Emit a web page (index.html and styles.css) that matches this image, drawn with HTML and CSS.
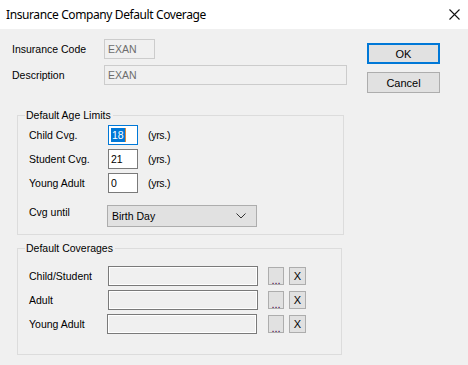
FILE: index.html
```html
<!DOCTYPE html>
<html lang="en">
<head>
    <meta charset="UTF-8">
    <title>Insurance Company Default Coverage</title>
    <link rel="stylesheet" href="styles.css">
</head>
<body>
    <div class="window">
        <div class="titlebar">
            <span class="title">Insurance Company Default Coverage</span>
            <span class="close">
                <svg width="11" height="11" viewBox="0 0 11 11"><path d="M0.5 0.5 L10.5 10.5 M10.5 0.5 L0.5 10.5" stroke="#111" stroke-width="1.1" fill="none"/></svg>
            </span>
        </div>

        <div class="dialog">
            <div class="top">
                <div class="info">
                    <div class="row">
                        <span class="label wide">Insurance Code</span>
                        <div class="textbox disabled code">EXAN</div>
                    </div>
                    <div class="row">
                        <span class="label wide">Description</span>
                        <div class="textbox disabled desc">EXAN</div>
                    </div>
                </div>
                <div class="actions">
                    <button class="btn default">OK</button>
                    <button class="btn">Cancel</button>
                </div>
            </div>

            <fieldset class="group age">
                <legend>Default Age Limits</legend>
                <div class="rows">
                    <div class="row">
                        <span class="label">Child Cvg.</span>
                        <div class="textbox num focused"><span class="sel">18</span></div>
                        <span class="unit">(yrs.)</span>
                    </div>
                    <div class="row">
                        <span class="label">Student Cvg.</span>
                        <div class="textbox num">21</div>
                        <span class="unit">(yrs.)</span>
                    </div>
                    <div class="row">
                        <span class="label">Young Adult</span>
                        <div class="textbox num">0</div>
                        <span class="unit">(yrs.)</span>
                    </div>
                </div>
                <div class="row until">
                    <span class="label">Cvg until</span>
                    <div class="combo">
                        <span>Birth Day</span>
                        <svg width="10" height="6" viewBox="0 0 10 6"><path d="M0.5 0.5 L5 5 L9.5 0.5" stroke="#333" stroke-width="1" fill="none"/></svg>
                    </div>
                </div>
            </fieldset>

            <fieldset class="group cover">
                <legend>Default Coverages</legend>
                <div class="rows">
                    <div class="row">
                        <span class="label">Child/Student</span>
                        <div class="textbox readonly"></div>
                        <button class="mini dots">...</button>
                        <button class="mini">X</button>
                    </div>
                    <div class="row">
                        <span class="label">Adult</span>
                        <div class="textbox readonly"></div>
                        <button class="mini dots">...</button>
                        <button class="mini">X</button>
                    </div>
                    <div class="row">
                        <span class="label">Young Adult</span>
                        <div class="textbox readonly shift"></div>
                        <button class="mini dots">...</button>
                        <button class="mini">X</button>
                    </div>
                </div>
            </fieldset>
        </div>
    </div>
</body>
</html>
```

FILE: styles.css
```css
* {
    margin: 0;
    padding: 0;
    box-sizing: border-box;
}

body {
    font-family: "Liberation Sans", Arial, sans-serif;
    font-size: 10.5px;
    color: #000;
    background: #f0f0f0;
}

.window {
    width: 468px;
    height: 365px;
    overflow: hidden;
}

.titlebar {
    height: 29px;
    background: #fff;
    display: flex;
    align-items: center;
    justify-content: space-between;
    padding: 0 7px 0 6px;
}

.title {
    font-family: "Noto Sans", sans-serif;
    font-size: 12px;
    letter-spacing: -0.4px;
    color: #000;
    padding-bottom: 1px;
}

.close {
    display: flex;
    padding-right: 1px;
}

.dialog {
    height: 336px;
    background: #f0f0f0;
    padding-top: 10px;
}

.top {
    display: flex;
    align-items: flex-start;
}

.info {
    width: 347px;
    padding-left: 12px;
    display: flex;
    flex-direction: column;
    gap: 6px;
}

.row {
    display: flex;
    align-items: center;
}

.label {
    width: 79px;
    flex-shrink: 0;
}

.label.wide {
    width: 92px;
}

.textbox {
    height: 20px;
    border: 1px solid #7a7a7a;
    background: #fff;
    padding-left: 3px;
    display: flex;
    align-items: center;
}

.textbox.disabled {
    border-color: #cccccc;
    background: #f0f0f0;
    color: #6d6d6d;
}

.code {
    width: 51px;
}

.desc {
    width: 243px;
}

.actions {
    margin-left: 20px;
    margin-top: 4px;
    display: flex;
    flex-direction: column;
    gap: 8px;
}

.btn {
    width: 73px;
    height: 21px;
    font-family: "Liberation Sans", Arial, sans-serif;
    font-size: 11px;
    background: #e1e1e1;
    border: 1px solid #adadad;
    color: #000;
}

.btn.default {
    border: 2px solid #0078d7;
}

.group {
    margin-left: 17px;
    border: 1px solid #dcdcdc;
    padding-left: 11px;
}

.group legend {
    margin-left: -4px;
    padding: 0 2px 0 1px;
    line-height: 14px;
}

.age {
    width: 327px;
    margin-top: 15px;
    padding-top: 3px;
    padding-bottom: 7px;
}

.rows {
    display: flex;
    flex-direction: column;
    gap: 4px;
}

.num {
    width: 30px;
    padding-left: 2px;
}

.focused {
    border-color: #0078d7;
}

.sel {
    background: #0078d7;
    color: #fff;
    line-height: 14px;
    padding: 0 1px;
    border-right: 1px solid #e08a3a;
}

.unit {
    margin-left: 10px;
    letter-spacing: -0.3px;
}

.until {
    margin-top: 12px;
    align-items: flex-start;
}

.until .label {
    padding-top: 1px;
}

.combo {
    width: 150px;
    height: 22px;
    margin-left: -1px;
    background: #e1e1e1;
    border: 1px solid #adadad;
    display: flex;
    align-items: center;
    justify-content: space-between;
    padding: 0 10px 0 4px;
}

.cover {
    width: 325px;
    margin-top: 6px;
    padding-top: 11px;
    padding-bottom: 20px;
}

.readonly {
    width: 150px;
    background: #f0f0f0;
    box-shadow: inset 0 0 0 1px #fff;
}

.readonly.shift {
    margin-left: -1px;
}

.mini {
    width: 16px;
    height: 18px;
    margin-left: 10px;
    background: #e1e1e1;
    border: 1px solid #adadad;
    font-family: "Liberation Sans", Arial, sans-serif;
    font-size: 11px;
    color: #000;
}

.mini + .mini {
    margin-left: 5px;
    width: 17px;
}

.dots {
    color: #400040;
    line-height: 18px;
    padding-top: 3px;
}

.readonly.shift + .mini {
    margin-left: 11px;
}
```
